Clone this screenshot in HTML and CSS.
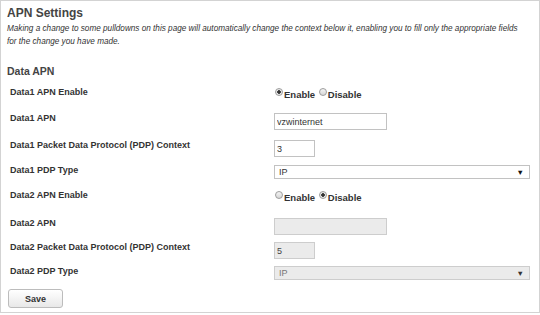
FILE: index.html
```html
<!DOCTYPE html>
<html>
<head>
<meta charset="utf-8">
<title>APN Settings</title>
<link rel="stylesheet" href="styles.css">
</head>
<body>
<div class="panel">
  <h1 class="title">APN Settings</h1>
  <p class="desc">Making a change to some pulldowns on this page will automatically change the context below it, enabling you to fill only the appropriate fields for the change you have made.</p>
  <h2 class="section">Data APN</h2>
  <div class="form-grid">
    <div class="lbl">Data1 APN Enable</div>
    <div class="ctl radios">
      <label class="opt"><input type="radio" class="radio" name="d1" checked>Enable</label>
      <label class="opt"><input type="radio" class="radio" name="d1">Disable</label>
    </div>

    <div class="lbl">Data1 APN</div>
    <div class="ctl"><input type="text" class="text-input" value="vzwinternet"></div>

    <div class="lbl">Data1 Packet Data Protocol (PDP) Context</div>
    <div class="ctl"><input type="text" class="text-input short" value="3"></div>

    <div class="lbl">Data1 PDP Type</div>
    <div class="ctl"><div class="select"><span>IP</span><span class="arrow">▼</span></div></div>

    <div class="lbl">Data2 APN Enable</div>
    <div class="ctl radios">
      <label class="opt"><input type="radio" class="radio" name="d2">Enable</label>
      <label class="opt"><input type="radio" class="radio" name="d2" checked>Disable</label>
    </div>

    <div class="lbl">Data2 APN</div>
    <div class="ctl"><input type="text" class="text-input" value="" disabled></div>

    <div class="lbl">Data2 Packet Data Protocol (PDP) Context</div>
    <div class="ctl"><input type="text" class="text-input short" value="5" disabled></div>

    <div class="lbl">Data2 PDP Type</div>
    <div class="ctl"><div class="select disabled"><span>IP</span><span class="arrow">▼</span></div></div>
  </div>
  <button class="save" type="button">Save</button>
</div>
</body>
</html>
```
FILE: styles.css
```css
html, body {
  margin: 0;
  padding: 0;
  background: #fff;
}

.panel {
  box-sizing: border-box;
  width: 540px;
  height: 313px;
  border: 1px solid #d3d3d3;
  padding: 5px 6px 0 6px;
  font-family: "Liberation Sans", Arial, sans-serif;
  color: #333;
}

.title {
  margin: 0;
  font-size: 12px;
  line-height: 14px;
  font-weight: bold;
  color: #444;
}

.desc {
  margin: 2px 0 0;
  max-width: 518px;
  font-size: 8.2px;
  line-height: 13px;
  font-style: italic;
  color: #333;
}

.section {
  margin: 16px 0 0;
  font-size: 10.5px;
  line-height: 14px;
  font-weight: bold;
  color: #444;
}

.form-grid {
  display: grid;
  grid-template-columns: 264px 1fr;
  grid-template-rows: 26px 27px 25px 25px 28px 24px 24px auto;
  margin: 6px 0 0 3px;
}

.lbl {
  font-size: 9px;
  line-height: 16px;
  font-weight: bold;
  color: #333;
}

.ctl {
  padding-top: 3px;
}

.radios {
  font-size: 9.5px;
  line-height: 16px;
  font-weight: bold;
  color: #333;
}

.opt {
  white-space: nowrap;
}

.radio {
  -webkit-appearance: none;
  appearance: none;
  box-sizing: border-box;
  width: 8px;
  height: 8px;
  margin: 0 1px 0 1px;
  border: 1px solid #9d9d9d;
  border-radius: 50%;
  background: linear-gradient(#f4f4f4, #d6d6d6);
  vertical-align: 2px;
}

.radio:checked {
  background: radial-gradient(circle, #333 0 1.5px, #e8e8e8 2.1px);
}

.text-input {
  box-sizing: border-box;
  width: 113px;
  height: 17px;
  margin: 0;
  padding: 0 2px;
  border: 1px solid #c2c2c2;
  border-radius: 0;
  background: #fff;
  font-family: "Liberation Sans", Arial, sans-serif;
  font-size: 9px;
  color: #333;
  display: block;
}

.text-input.short {
  width: 41px;
}

.text-input:disabled {
  background: #ebebeb;
  border-color: #cdcdcd;
  color: #444;
}

.select {
  box-sizing: border-box;
  width: 256px;
  height: 14px;
  border: 1px solid #c2c2c2;
  background: #fff;
  display: flex;
  align-items: center;
  justify-content: space-between;
  padding: 0 5px 0 4px;
  font-size: 9px;
  color: #333;
}

.select .arrow {
  font-size: 7.5px;
  color: #111;
}

.select.disabled {
  background: #ebebeb;
  border-color: #cdcdcd;
  color: #777;
}

.select.disabled .arrow {
  color: #333;
}

.save {
  display: block;
  box-sizing: border-box;
  width: 55px;
  height: 19px;
  margin: 9px 0 0 1px;
  padding: 0;
  border: 1px solid #bcbcbc;
  border-radius: 3px;
  background: linear-gradient(#ffffff, #e8e8e8);
  font-family: "Liberation Sans", Arial, sans-serif;
  font-size: 9px;
  font-weight: bold;
  color: #333;
}
```
